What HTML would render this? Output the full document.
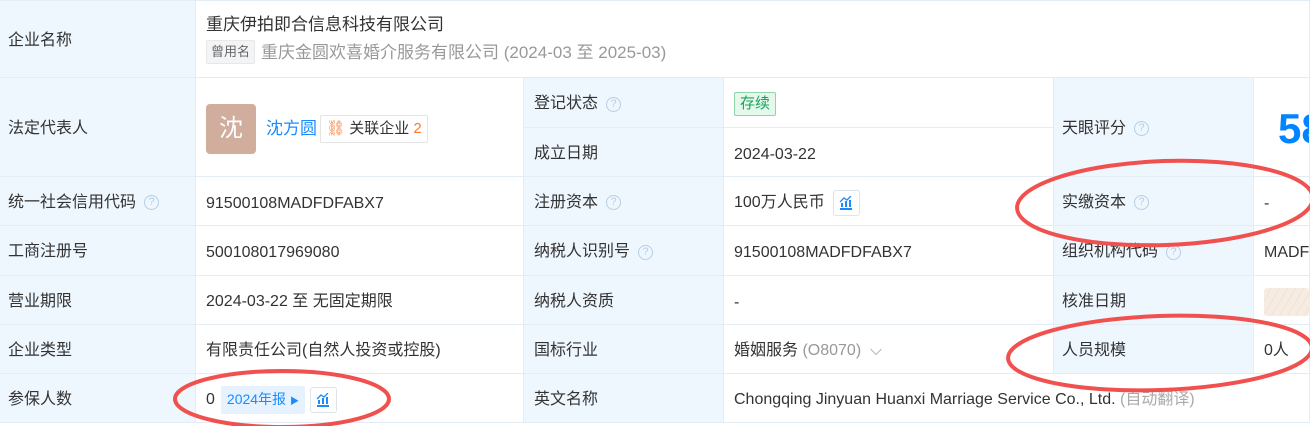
<!DOCTYPE html>
<html><head><meta charset="utf-8"><style>
*{margin:0;padding:0;box-sizing:border-box}
body{width:1310px;height:426px;overflow:hidden;background:#fff;font-family:"Liberation Sans","Noto Sans CJK SC",sans-serif;font-size:16px;color:#333;position:relative}
.c{position:absolute;border-right:1px solid #e4ecf4;border-bottom:1px solid #e4ecf4;display:flex;align-items:center;padding-left:8px;padding-top:3px;white-space:nowrap;overflow:hidden;line-height:22px}
.l{background:#eef6fe}
.v{padding-left:10px}
.lt{padding-top:5px}
.q{display:inline-block;width:15px;height:15px;border:1.3px solid #b5cfe6;border-radius:50%;color:#b5cfe6;font-size:11px;line-height:13px;text-align:center;margin-left:8px}
.ib{display:inline-flex;align-items:center;justify-content:center;width:27px;height:26px;border:1px solid #dde4ec;border-radius:3px;margin-left:8px}
</style></head><body>
<div style="position:absolute;left:0;top:0;width:1310px;height:1px;background:#e4ecf4"></div>
<div class="c l" style="left:0;top:1px;width:196px;height:77px">企业名称</div>
<div class="c v" style="left:196px;top:1px;width:1114px;height:77px;display:block;padding-top:13px">
<div style="font-size:17px">重庆伊拍即合信息科技有限公司</div>
<div style="margin-top:4px;color:#999;font-size:17px"><span style="display:inline-block;background:#f3f4f6;border:1px solid #e8e8e8;border-radius:2px;color:#666;font-size:13px;line-height:18px;padding:2px 4px;margin-right:6px;vertical-align:2px">曾用名</span>重庆金圆欢喜婚介服务有限公司 (2024-03 至 2025-03)</div>
</div>
<div class="c l" style="left:0;top:78px;width:196px;height:99px">法定代表人</div>
<div class="c v" style="left:196px;top:78px;width:328px;height:99px">
<div style="width:50px;height:50px;background:#d0ad9c;border-radius:4px;color:#fff;font-size:24px;display:flex;align-items:center;justify-content:center">沈</div>
<span style="color:#1a8cff;margin-left:10px;font-size:17px">沈方圆</span>
<span style="margin-left:3px;border:1px solid #e4e4e4;border-radius:2px;padding:2px 5px;font-size:15px;color:#333"><span style="color:#ff7a2e">⛓</span> 关联企业 <span style="color:#ff7a2e">2</span></span>
</div>
<div class="c l" style="left:524px;top:78px;width:200px;height:50px;padding-left:10px">登记状态<span class="q">?</span></div>
<div class="c v" style="left:724px;top:78px;width:330px;height:50px"><span style="background:#e5f8ec;border:1px solid #8fd6a8;color:#1aa35a;border-radius:2px;padding:0 5px;font-size:15px">存续</span></div>
<div class="c l" style="left:524px;top:128px;width:200px;height:49px;padding-left:10px">成立日期</div>
<div class="c v lt" style="left:724px;top:128px;width:330px;height:49px">2024-03-22</div>
<div class="c l" style="left:1054px;top:78px;width:200px;height:99px">天眼评分<span class="q">?</span></div>
<div class="c v" style="left:1254px;top:78px;width:56px;height:99px;padding-left:24px;color:#0084ff;font-size:42px;font-weight:bold;padding-top:4px">58</div>
<div class="c l" style="left:0;top:177px;width:196px;height:49px">统一社会信用代码<span class="q">?</span></div>
<div class="c v lt" style="left:196px;top:177px;width:328px;height:49px">91500108MADFDFABX7</div>
<div class="c l" style="left:524px;top:177px;width:200px;height:49px;padding-left:10px">注册资本<span class="q">?</span></div>
<div class="c v" style="left:724px;top:177px;width:330px;height:49px">100万人民币<span class="ib"><svg width="14" height="14" viewBox="0 0 14 14" fill="#1a8cff"><rect x="1" y="12" width="12" height="2"/><rect x="2" y="7" width="2" height="4"/><rect x="6" y="5" width="2" height="6"/><rect x="10" y="4" width="2" height="7"/><path d="M1 6 L5 2 L8 4 L12 0" stroke="#1a8cff" stroke-width="1.3" fill="none"/></svg></span></div>
<div class="c l" style="left:1054px;top:177px;width:200px;height:49px">实缴资本<span class="q">?</span></div>
<div class="c v lt" style="left:1254px;top:177px;width:56px;height:49px">-</div>
<div class="c l" style="left:0;top:226px;width:196px;height:50px">工商注册号</div>
<div class="c v lt" style="left:196px;top:226px;width:328px;height:50px">500108017969080</div>
<div class="c l" style="left:524px;top:226px;width:200px;height:50px;padding-left:10px">纳税人识别号<span class="q">?</span></div>
<div class="c v lt" style="left:724px;top:226px;width:330px;height:50px">91500108MADFDFABX7</div>
<div class="c l" style="left:1054px;top:226px;width:200px;height:50px">组织机构代码<span class="q">?</span></div>
<div class="c v lt" style="left:1254px;top:226px;width:56px;height:50px">MADFDFABX</div>
<div class="c l" style="left:0;top:276px;width:196px;height:49px">营业期限</div>
<div class="c v" style="left:196px;top:276px;width:328px;height:49px">2024-03-22 至 无固定期限</div>
<div class="c l" style="left:524px;top:276px;width:200px;height:49px;padding-left:10px">纳税人资质</div>
<div class="c v lt" style="left:724px;top:276px;width:330px;height:49px">-</div>
<div class="c l" style="left:1054px;top:276px;width:200px;height:49px">核准日期</div>
<div class="c v" style="left:1254px;top:276px;width:56px;height:49px"><div style="width:60px;height:28px;background:repeating-linear-gradient(120deg,#f7ece2 0 6px,#f1e2d4 6px 7px);border-radius:3px"></div></div>
<div class="c l" style="left:0;top:325px;width:196px;height:49px">企业类型</div>
<div class="c v" style="left:196px;top:325px;width:328px;height:49px">有限责任公司(自然人投资或控股)</div>
<div class="c l" style="left:524px;top:325px;width:200px;height:49px;padding-left:10px">国标行业</div>
<div class="c v" style="left:724px;top:325px;width:330px;height:49px">婚姻服务<span style="color:#999">&nbsp;(O8070)&nbsp;&nbsp;⌵</span></div>
<div class="c l" style="left:1054px;top:325px;width:200px;height:49px">人员规模</div>
<div class="c v" style="left:1254px;top:325px;width:56px;height:49px">0人</div>
<div class="c l" style="left:0;top:374px;width:196px;height:49px">参保人数</div>
<div class="c v" style="left:196px;top:374px;width:328px;height:49px">0<span style="margin-left:6px;background:#e6f2fe;color:#1a8cff;font-size:14px;padding:2px 6px;border-radius:2px">2024年报 <span style="font-size:9px">▶</span></span><span class="ib" style="margin-left:5px"><svg width="14" height="14" viewBox="0 0 14 14" fill="#1a8cff"><rect x="1" y="12" width="12" height="2"/><rect x="2" y="7" width="2" height="4"/><rect x="6" y="5" width="2" height="6"/><rect x="10" y="4" width="2" height="7"/><path d="M1 6 L5 2 L8 4 L12 0" stroke="#1a8cff" stroke-width="1.3" fill="none"/></svg></span></div>
<div class="c l" style="left:524px;top:374px;width:200px;height:49px;padding-left:10px">英文名称</div>
<div class="c v" style="left:724px;top:374px;width:586px;height:49px">Chongqing Jinyuan Huanxi Marriage Service Co., Ltd.<span style="color:#aaa">&nbsp;(自动翻译)</span></div>
<svg width="1310" height="426" style="position:absolute;left:0;top:0" fill="none" stroke="#f0514f" stroke-width="4">
<ellipse cx="1165" cy="203" rx="148" ry="42" transform="rotate(-2 1165 203)"/>
<ellipse cx="1160" cy="353" rx="152" ry="37" transform="rotate(-2 1160 353)"/>
<ellipse cx="282" cy="399" rx="107" ry="28"/>
</svg>
</body></html>
